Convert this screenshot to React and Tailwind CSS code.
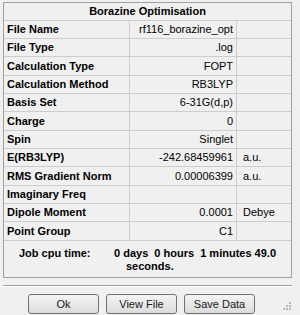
const rows = [
  { label: "File Name", value: "rf116_borazine_opt", unit: "", h: "h-[18px]" },
  { label: "File Type", value: ".log", unit: "", h: "h-[18px]" },
  { label: "Calculation Type", value: "FOPT", unit: "", h: "h-[19px]" },
  { label: "Calculation Method", value: "RB3LYP", unit: "", h: "h-[18px]" },
  { label: "Basis Set", value: "6-31G(d,p)", unit: "", h: "h-[18px]" },
  { label: "Charge", value: "0", unit: "", h: "h-[19px]" },
  { label: "Spin", value: "Singlet", unit: "", h: "h-[18px]" },
  { label: "E(RB3LYP)", value: "-242.68459961", unit: "a.u.", h: "h-[18px]" },
  { label: "RMS Gradient Norm", value: "0.00006399", unit: "a.u.", h: "h-[19px]" },
  { label: "Imaginary Freq", value: "", unit: "", h: "h-[18px]" },
  { label: "Dipole Moment", value: "0.0001", unit: "Debye", h: "h-[18px]" },
  { label: "Point Group", value: "C1", unit: "", h: "h-[19px]" },
];

const Btn = ({ children }) => (
  <button className="w-[71px] h-[20px] rounded-[3px] border border-[#707070] bg-gradient-to-b from-[#f4f4f4] to-[#dcdcdc] text-[11px] text-[#1a1a1a] leading-none">
    {children}
  </button>
);

export default function App() {
  return (
    <div
      className="w-[300px] h-[315px] bg-[#f0f0f0] relative overflow-hidden text-black"
      style={{ fontFamily: '"Liberation Sans", Arial, sans-serif' }}
    >
      <div className="pt-[2px] pl-[3px]">
        {/* Properties box */}
        <div className="w-[289px] border border-[#a0a0a0] bg-[#f0f0f0]">
          <div className="h-[18px] border-b border-[#cdcdcd] flex items-center justify-center text-[11px] font-bold">
            Borazine Optimisation
          </div>

          {rows.map((r) => (
            <div key={r.label} className={`${r.h} flex border-b border-[#cdcdcd] text-[11px]`}>
              <div className="w-[126px] border-r border-[#cdcdcd] flex items-center pl-[3px] font-bold">
                {r.label}
              </div>
              <div className="w-[107px] border-r border-[#cdcdcd] flex items-center justify-end pr-[3px]">
                {r.value}
              </div>
              <div className="flex-1 flex items-center pl-[6px]">{r.unit}</div>
            </div>
          ))}

          {/* cpu time */}
          <div className="h-[36px] relative text-[11px] font-bold leading-[13px]">
            <div className="absolute left-[15px] top-[6px]">Job cpu time:</div>
            <div className="absolute left-[110px] top-[6px] whitespace-pre">
              0 days  0 hours  1 minutes 49.0
            </div>
            <div className="absolute left-[122px] top-[19px]">seconds.</div>
          </div>
        </div>

        {/* separator */}
        <div className="w-[289px] mt-[7px] border-t border-[#a0a0a0] border-b border-b-white" />

        {/* buttons */}
        <div className="flex gap-[7px] pl-[25px] mt-[7px]">
          <Btn>Ok</Btn>
          <Btn>View File</Btn>
          <Btn>Save Data</Btn>
        </div>
      </div>

      {/* resize grip */}
      <div className="absolute right-[9px] bottom-[5px] grid grid-cols-3 gap-[1px] w-[8px]">
        <span />
        <span />
        <span className="w-[2px] h-[2px] bg-[#b8b8b8]" />
        <span />
        <span className="w-[2px] h-[2px] bg-[#b8b8b8]" />
        <span className="w-[2px] h-[2px] bg-[#b8b8b8]" />
        <span className="w-[2px] h-[2px] bg-[#b8b8b8]" />
        <span className="w-[2px] h-[2px] bg-[#b8b8b8]" />
        <span className="w-[2px] h-[2px] bg-[#b8b8b8]" />
      </div>
    </div>
  );
}
